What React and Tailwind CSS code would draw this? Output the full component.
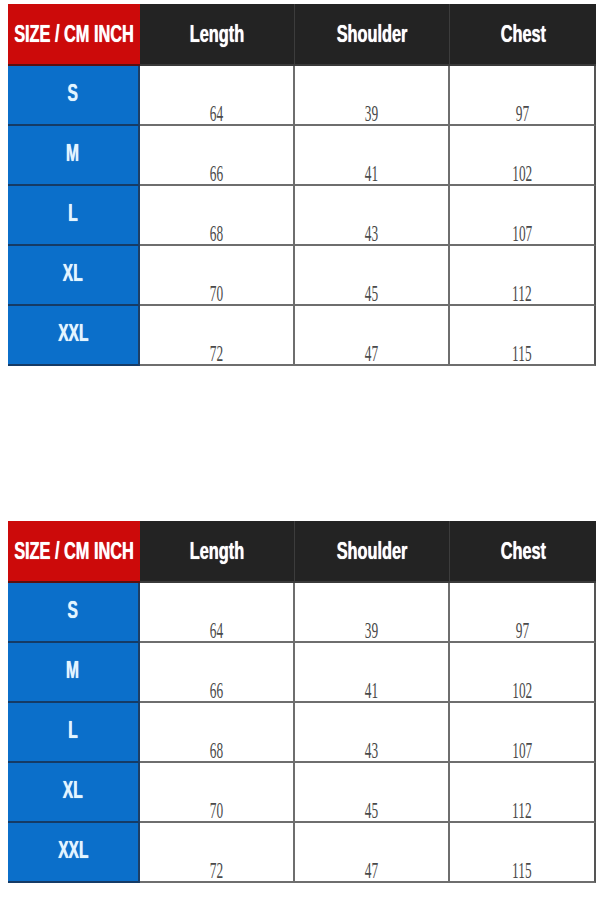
import React from "react";

const rows = [
  ["S", "64", "39", "97"],
  ["M", "66", "41", "102"],
  ["L", "68", "43", "107"],
  ["XL", "70", "45", "112"],
  ["XXL", "72", "47", "115"],
];

const head = "font-['Liberation_Sans',Arial,sans-serif] font-bold text-white text-[24px] leading-none whitespace-nowrap inline-block scale-x-[0.68] [text-shadow:0_0_1px_#fff]";

function Table() {
  return (
    <div className="w-[588px] flex flex-col">
      <div className="grid grid-cols-[132px_155px_155px_146px] h-[62px]">
        <div className="bg-[#cc0a0a] flex items-center justify-center border-b-2 border-[#5a1010]">
          <span className={head + " scale-x-[0.62]"}>SIZE / CM INCH</span>
        </div>
        <div className="bg-[#232323] flex items-center justify-center border-b-2 border-[#3a3a3a] border-r border-r-[#3c3c3c]">
          <span className={head}>Length</span>
        </div>
        <div className="bg-[#232323] flex items-center justify-center border-b-2 border-[#3a3a3a] border-r border-r-[#3c3c3c]">
          <span className={head}>Shoulder</span>
        </div>
        <div className="bg-[#232323] flex items-center justify-center border-b-2 border-[#3a3a3a]">
          <span className={head}>Chest</span>
        </div>
      </div>
      {rows.map((r) => (
        <div key={r[0]} className="grid grid-cols-[132px_155px_155px_146px] h-[60px]">
          <div className="bg-[#0b6fca] flex items-start justify-center pt-[16px] border-b-2 border-[#153b66] border-r-2 border-r-[#1d3f66]">
            <span className="font-['Liberation_Sans',Arial,sans-serif] font-bold text-[#e3f5ff] text-[23px] leading-none inline-block scale-x-[0.68] [text-shadow:0_0_1px_#e3f5ff]">
              {r[0]}
            </span>
          </div>
          {r.slice(1).map((v, i) => (
            <div
              key={i}
              className={
                "bg-white flex items-end justify-center border-b-2 border-[#6e6e6e] " +
                (i === 2 ? "border-r-2 border-r-[#555]" : "border-r-2 border-r-[#6e6e6e]")
              }
            >
              <span className="font-['Liberation_Serif','Times_New_Roman',serif] text-[#4a4a4a] text-[23px] leading-none inline-block scale-x-[0.58] mb-[-1px]">
                {v}
              </span>
            </div>
          ))}
        </div>
      ))}
    </div>
  );
}

export default function App() {
  return (
    <div className="w-[600px] h-[900px] bg-white pl-[8px] pt-[4px] flex flex-col gap-[155px]">
      <Table />
      <Table />
    </div>
  );
}
